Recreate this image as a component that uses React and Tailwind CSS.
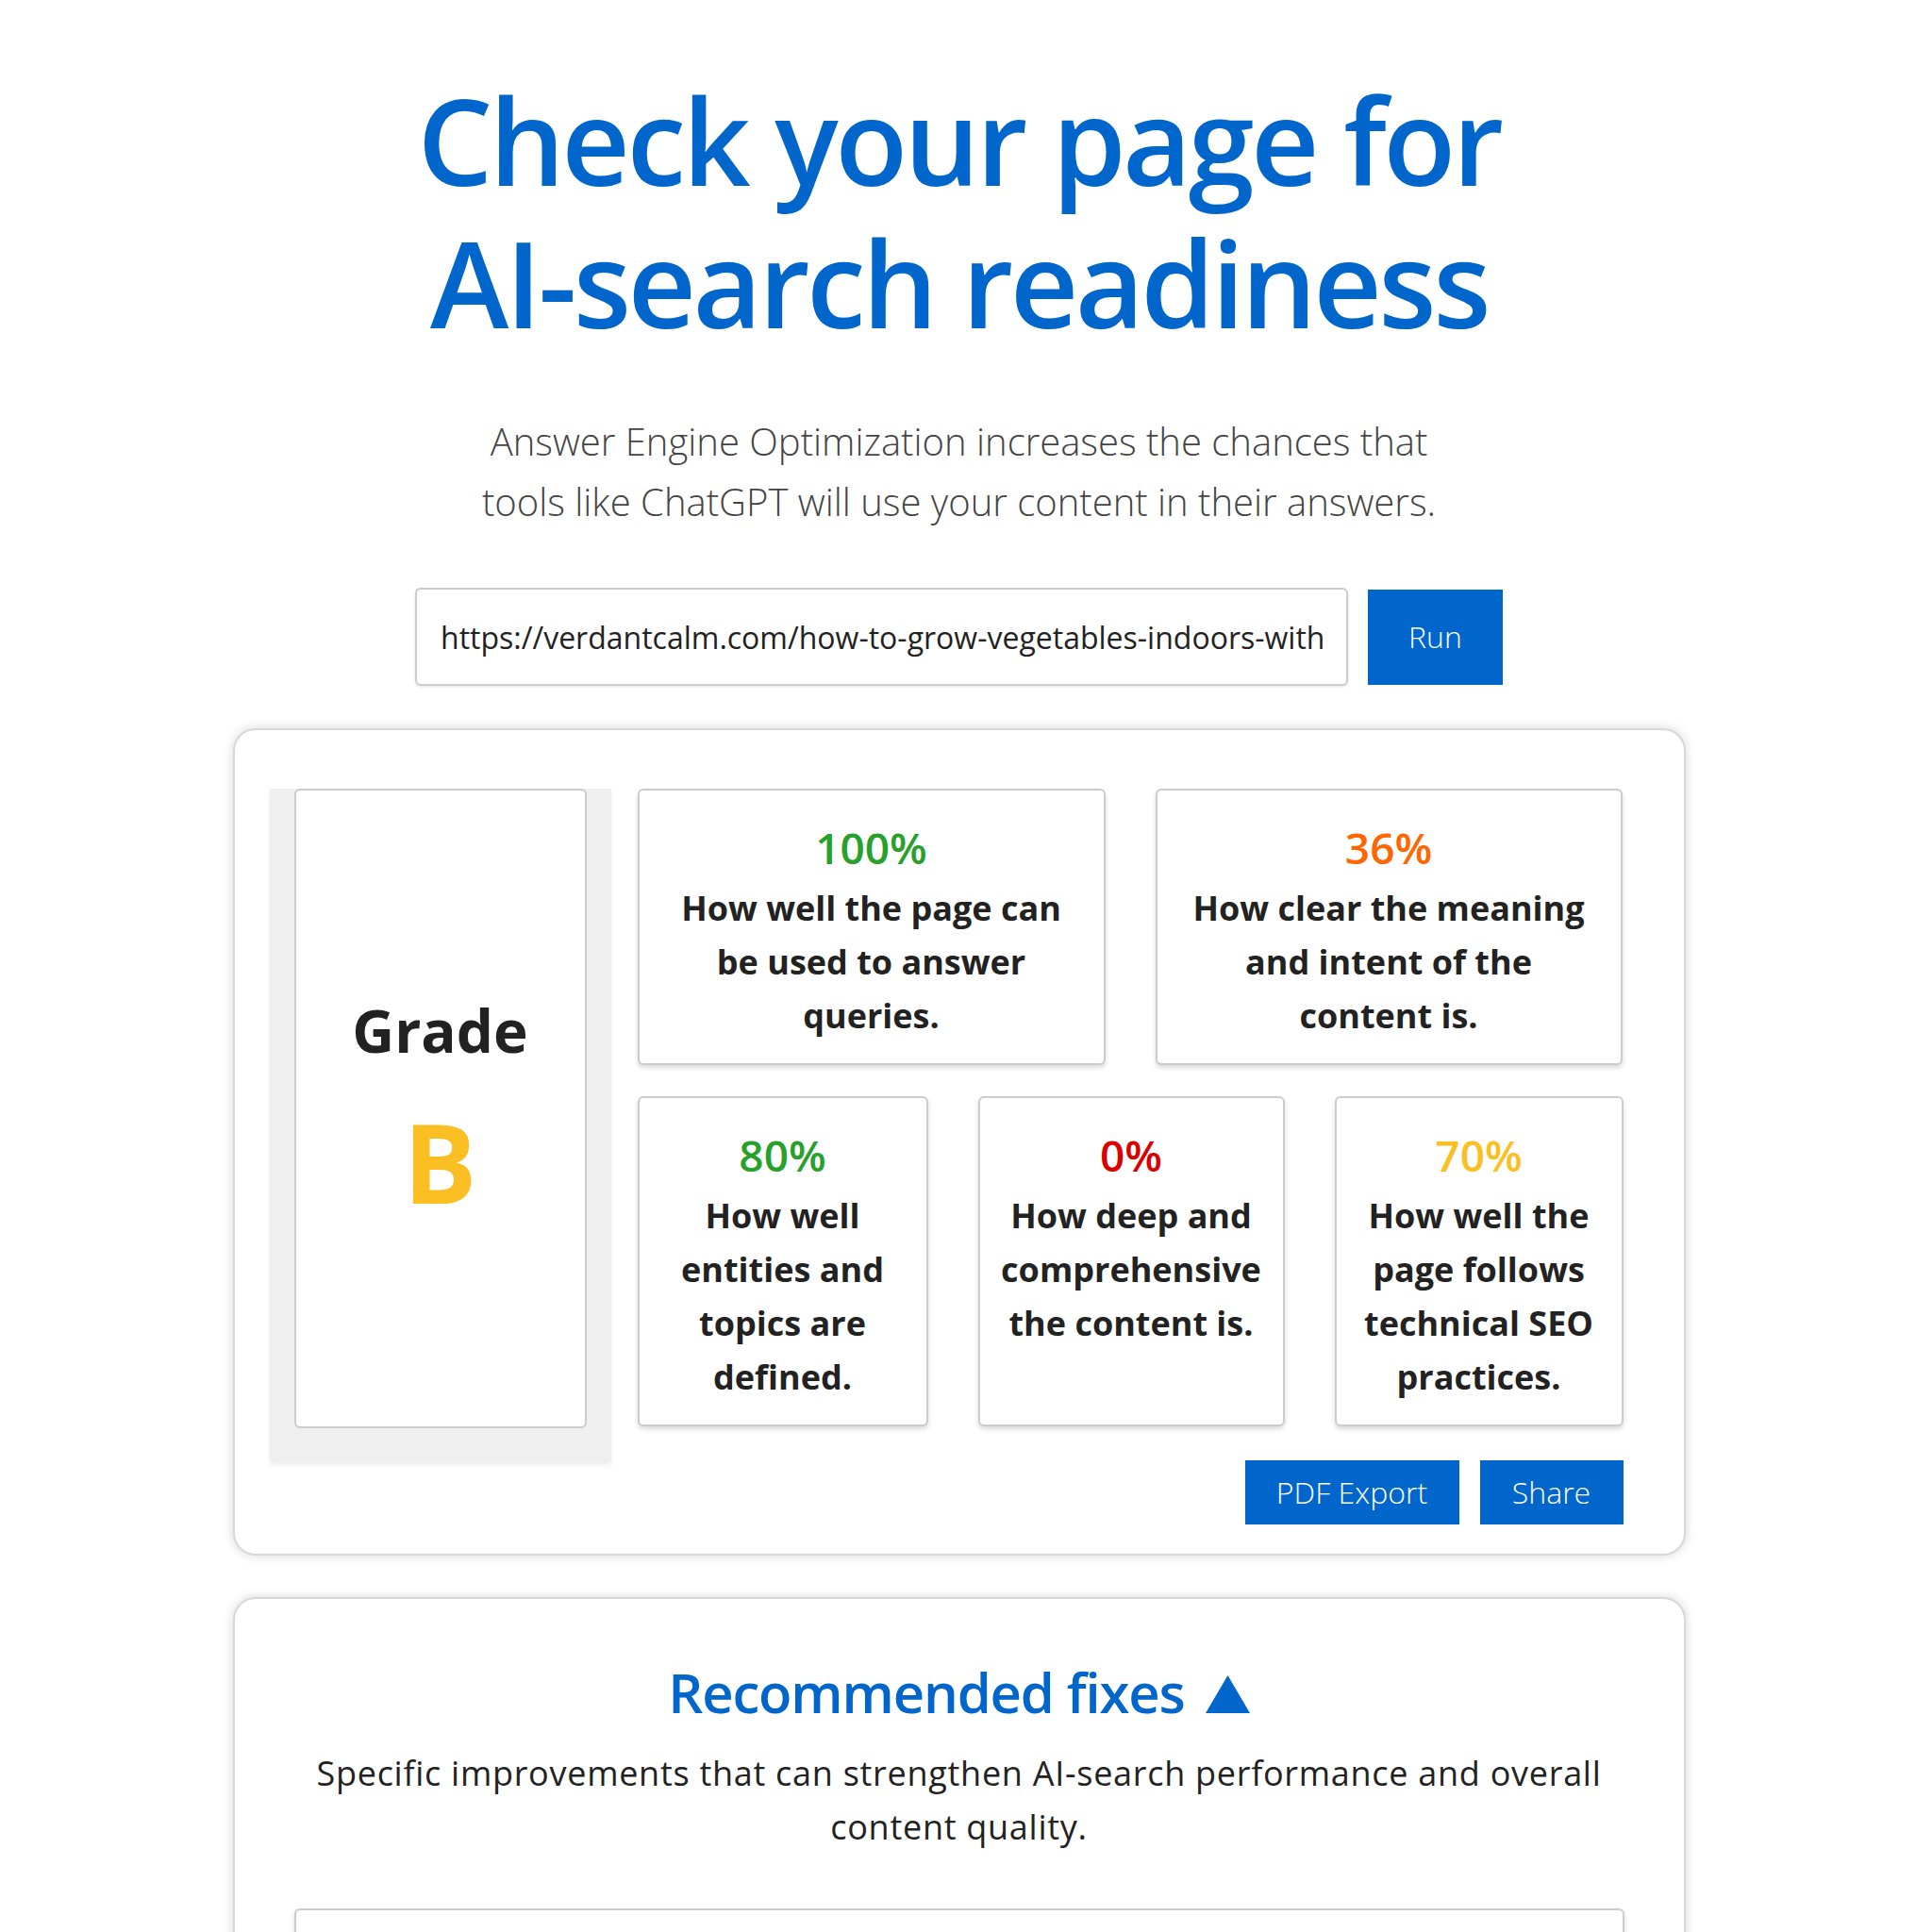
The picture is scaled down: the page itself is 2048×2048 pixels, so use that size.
const scores = [
    { pct: '100%', color: 'text-[#28a02c]', label: 'How well the page can be used to answer queries.', w: 'w-[496px]', px: 'px-[24px]' },
    { pct: '36%', color: 'text-[#ff6600]', label: 'How clear the meaning and intent of the content is.', w: 'w-[495px]', px: 'px-[24px]' },
];

const scores2 = [
    { pct: '80%', color: 'text-[#28a02c]', label: 'How well entities and topics are defined.', w: 'w-[308px]' },
    { pct: '0%', color: 'text-[#d90000]', label: 'How deep and comprehensive the content is.', w: 'w-[325px]' },
    { pct: '70%', color: 'text-[#fbbf24]', label: 'How well the page follows technical SEO practices.', w: 'w-[306px]' },
];

function ScoreCard({ pct, color, label, w, px = 'px-[22px]' }) {
    return (
        <div className={`${w} ${px} bg-white border-2 border-[#cccccc] rounded-[6px] shadow-[0_3px_5px_rgba(0,0,0,0.15)] pt-[24px] pb-[22px] text-center`}>
            <div className={`${color} text-[46px] leading-[72px] font-semibold`}>{pct}</div>
            <div className="text-[36px] leading-[57px] font-bold text-[#222]">{label}</div>
        </div>
    );
}

export default function App() {
    return (
        <div className="w-[2033px] bg-white font-['Open_Sans',sans-serif] flex flex-col items-center pb-20">
            <h1 className="pt-[73px] max-w-[1300px] text-center text-[126px] leading-[151px] font-semibold tracking-[-0.028em] text-[#0066cc]">
                Check your page for AI-search readiness
            </h1>

            <p className="mt-[61px] max-w-[1060px] text-center text-[40px] leading-[64px] font-light text-[#444]">
                Answer Engine Optimization increases the chances that tools like ChatGPT will use your content in their answers.
            </p>

            {/* url form */}
            <div className="mt-[59px] flex items-center gap-[21px]">
                <input
                    readOnly
                    value="https://verdantcalm.com/how-to-grow-vegetables-indoors-with-led-grow-lights"
                    className="w-[989px] h-[104px] border-2 border-[#cccccc] rounded-[6px] shadow-[0_1px_3px_rgba(0,0,0,0.12)] px-[25px] text-[32px] text-[#222] bg-white outline-none"
                />
                <button className="w-[143px] h-[101px] bg-[#0066cc] text-white text-[32px] font-light">Run</button>
            </div>

            {/* results */}
            <div className="mt-[45px] w-[1540px] bg-white rounded-[24px] border-2 border-[#d8d8d8] shadow-[0_0_12px_rgba(0,0,0,0.16)] pt-[62px] pl-[37px] pr-[64px] pb-[31px] flex items-start gap-[28px]">
                <div className="w-[363px] bg-[#efefef] px-[26px] pb-[35px] shadow-[0_4px_6px_rgba(0,0,0,0.07)]">
                    <div className="h-[678px] bg-white border-2 border-[#cccccc] rounded-[6px] flex flex-col items-center justify-center">
                        <div className="text-[62px] leading-none font-bold text-[#222]">Grade</div>
                        <div className="mt-[50px] text-[116px] leading-none font-bold text-[#fbbf24]">B</div>
                    </div>
                </div>

                <div className="w-[1045px] flex flex-col">
                    <div className="flex gap-[53px]">
                        {scores.map((s) => <ScoreCard key={s.pct} {...s} />)}
                    </div>
                    <div className="mt-[33px] flex gap-[53px]">
                        {scores2.map((s) => <ScoreCard key={s.pct} {...s} />)}
                    </div>
                    <div className="mt-[36px] flex justify-end gap-[22px]">
                        <button className="w-[227px] h-[68px] bg-[#0066cc] text-white text-[32px] font-light">PDF Export</button>
                        <button className="w-[152px] h-[68px] bg-[#0066cc] text-white text-[32px] font-light">Share</button>
                    </div>
                </div>
            </div>

            {/* fixes */}
            <div className="mt-[44px] w-[1540px] bg-white rounded-[24px] border-2 border-[#d8d8d8] shadow-[0_0_12px_rgba(0,0,0,0.16)] pt-[64px] px-[63px] pb-[63px] flex flex-col items-center">
                <h2 className="flex items-center text-[58px] leading-[70px] font-semibold tracking-[-0.02em] text-[#0066cc]">
                    Recommended fixes
                    <svg width="47" height="40" viewBox="0 0 47 40" className="ml-[22px] mt-[4px]">
                        <path d="M23.5 0 L47 40 L0 40 Z" fill="#0066cc" />
                    </svg>
                </h2>
                <p className="mt-[22px] text-center text-[36px] leading-[57px] tracking-[0.02em] text-[#222]">
                    Specific improvements that can strengthen AI-search performance and overall content quality.
                </p>
                <div className="mt-[58px] w-full h-[220px] bg-white border-2 border-[#cccccc] rounded-[6px] shadow-[0_3px_5px_rgba(0,0,0,0.15)]"></div>
            </div>
        </div>
    );
}
